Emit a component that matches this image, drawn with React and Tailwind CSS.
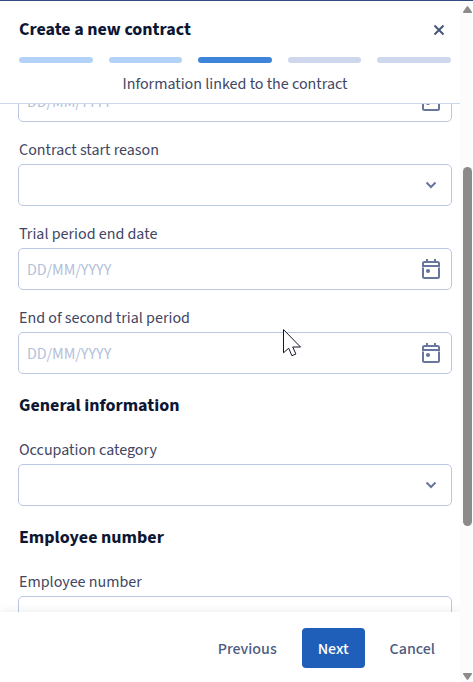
import { useLayoutEffect, useRef } from "react";

const steps = [
  { id: "identity", tone: "bg-[#b2d3f7]" },
  { id: "job", tone: "bg-[#b2d3f7]" },
  { id: "contract", tone: "bg-[#3e84d8]" },
  { id: "pay", tone: "bg-[#cfd7ed]" },
  { id: "summary", tone: "bg-[#cfd7ed]" },
];

const control =
  "block h-[42px] w-full appearance-none rounded-[5px] border border-[#bac7e2] bg-white pt-0.5 pl-2 pr-12 text-[16px] leading-6 text-[#3b4360] outline-none placeholder:text-[#b4bfdc] focus:border-[#3e84d8]";

function Label({ id, children }) {
  return (
    <label htmlFor={id} className="mb-0.5 block px-px text-[16px] leading-6 text-[#3f4663]">
      {children}
    </label>
  );
}

function CalendarIcon() {
  return (
    <svg viewBox="0 0 20 22" className="h-[22px] w-5" fill="none" aria-hidden="true">
      <path d="M6 1v3M14 1v3" stroke="#68759c" strokeWidth="2" />
      <path
        d="M2 7.5V5.5A1.5 1.5 0 0 1 3.5 4h13A1.5 1.5 0 0 1 18 5.5v2"
        stroke="#68759c"
        strokeWidth="2"
      />
      <path d="M1 8h18" stroke="#68759c" strokeWidth="2" />
      <path
        d="M2 9.6v8.9A1.5 1.5 0 0 0 3.5 20h13a1.5 1.5 0 0 0 1.5-1.5V9.6"
        stroke="#68759c"
        strokeWidth="2"
      />
      <circle cx="7" cy="13" r="2.1" fill="#68759c" />
    </svg>
  );
}

function DateField({ id, label, name }) {
  return (
    <div>
      {label && <Label id={id}>{label}</Label>}
      <div className="relative">
        <input id={id} type="text" aria-label={name} placeholder="DD/MM/YYYY" className={control} />
        <button
          type="button"
          aria-label="Open calendar"
          className="absolute inset-y-0 right-0 flex items-center px-[11px]"
        >
          <CalendarIcon />
        </button>
      </div>
    </div>
  );
}

function SelectField({ id, label }) {
  return (
    <div>
      <Label id={id}>{label}</Label>
      <div className="relative">
        <select id={id} defaultValue="" className={control}>
          <option value=""></option>
        </select>
        <svg
          viewBox="0 0 12 8"
          className="pointer-events-none absolute inset-y-0 right-[15px] my-auto h-2 w-3"
          fill="none"
          aria-hidden="true"
        >
          <path d="M1.5 1.5 6 6l4.5-4.5" stroke="#68759c" strokeWidth="2" />
        </svg>
      </div>
    </div>
  );
}

function SectionTitle({ children }) {
  return (
    <h2 className="my-[19px] px-px text-[18px] leading-[26px] font-bold text-[#0d1733]">
      {children}
    </h2>
  );
}

export default function App() {
  const body = useRef(null);

  useLayoutEffect(() => {
    body.current.scrollTop = 44;
  }, []);

  return (
    <div className="relative flex h-screen overflow-hidden border-t border-[#2f4d80] bg-white font-['Source_Sans_3','Source_Sans_Pro','Noto_Sans_CJK_SC',sans-serif]">
      <div className="flex min-w-0 flex-1 flex-col">
        <header className="border-b border-[#cdd6ea] pt-4 pr-[9px] pb-[7px] pl-[19px]">
          <div className="flex items-center justify-between">
            <h1 className="text-[18px] leading-[26px] font-bold text-[#0d1733]">Create a new contract</h1>
            <button type="button" aria-label="Close" className="flex h-6 w-6 items-center justify-center">
              <svg viewBox="0 0 12 12" className="h-3 w-3" fill="none" aria-hidden="true">
                <path d="m1.5 1.5 9 9M10.5 1.5l-9 9" stroke="#47567a" strokeWidth="2" />
              </svg>
            </button>
          </div>
          <div className="mt-3.5 grid grid-cols-5 gap-4">
            {steps.map((step) => (
              <span key={step.id} className={`h-1.5 rounded-full ${step.tone}`} />
            ))}
          </div>
          <p className="mt-[9px] text-center text-[16px] leading-6 text-[#3f4663]">
            Information linked to the contract
          </p>
        </header>

        <main ref={body} className="min-h-0 flex-1 overflow-hidden pt-5 pr-2 pb-5 pl-[18px]">
          <div className="flex flex-col gap-4">
            <DateField id="start-date" name="Contract start date" />
            <SelectField id="start-reason" label="Contract start reason" />
            <DateField id="trial-end" label="Trial period end date" />
            <DateField id="second-trial-end" label="End of second trial period" />
          </div>
          <SectionTitle>General information</SectionTitle>
          <SelectField id="occupation" label="Occupation category" />
          <SectionTitle>Employee number</SectionTitle>
          <Label id="employee-number">Employee number</Label>
          <input id="employee-number" type="text" className={control} />
        </main>

        <footer className="z-10 flex items-center justify-end gap-[9px] bg-white pt-4 pr-[9px] pb-3.5 text-[16px] leading-6 font-medium text-[#4b5a80] shadow-[0_0_10px_rgba(0,0,0,0.09)]">
          <button type="button" className="h-10 px-4 pt-0.5">
            Previous
          </button>
          <button type="button" className="h-10 rounded-[4px] bg-[#205fb9] px-4 pt-0.5 text-white">
            Next
          </button>
          <button type="button" className="h-10 px-4 pt-0.5">
            Cancel
          </button>
        </footer>
      </div>

      <div className="z-20 flex w-[13px] shrink-0 flex-col items-center bg-[#fcfcfc] pt-[5px] pb-0.5" aria-hidden="true">
        <svg viewBox="0 0 9 7" className="ml-0.5 h-[7px] w-[9px]">
          <path d="M3.6.8a1 1 0 0 1 1.8 0L9 6a.8.8 0 0 1-.7 1H.7A.8.8 0 0 1 0 6z" fill="#8b8b8b" />
        </svg>
        <div className="ml-0.5 flex w-[9px] flex-1 flex-col">
          <div className="flex-154" />
          <div className="flex-359 rounded-full bg-[#8b8b8b]" />
          <div className="flex-147" />
        </div>
        <svg viewBox="0 0 9 7" className="ml-0.5 h-[7px] w-[9px]">
          <path d="M3.6 6.2a1 1 0 0 0 1.8 0L9 1a.8.8 0 0 0-.7-1H.7A.8.8 0 0 0 0 1z" fill="#8b8b8b" />
        </svg>
      </div>

      <svg
        viewBox="0 0 19 28"
        className="pointer-events-none absolute top-[328px] left-[283px] z-30 h-7 w-[19px]"
        aria-hidden="true"
      >
        <path
          d="M.5.6v23.2l5.2-4.6 3.2 7.5 4-1.7-3.2-7h7.8z"
          fill="#fff"
          stroke="#15152a"
          strokeWidth="1"
        />
      </svg>
    </div>
  );
}
